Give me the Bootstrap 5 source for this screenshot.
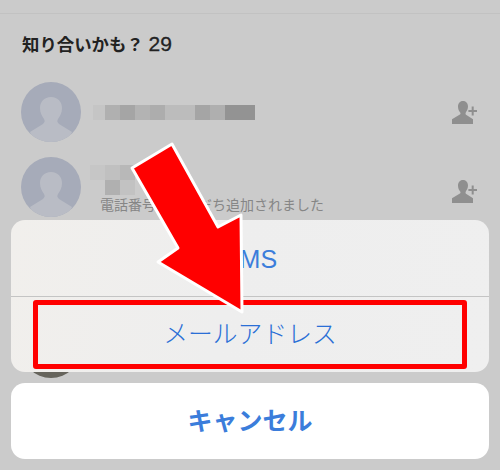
<!DOCTYPE html>
<html lang="ja">
<head>
<meta charset="utf-8">
<title>知り合いかも？</title>
<link href="https://cdn.jsdelivr.net/npm/bootstrap@5.3.0/dist/css/bootstrap.min.css" rel="stylesheet">
<style>
html,body{width:500px;height:470px;overflow:hidden}
body{background:#cbcbcb;font-family:"Liberation Sans","Noto Sans CJK JP",sans-serif;color:#1d1d1d}
.screen{position:relative;width:500px;height:470px;overflow:hidden}
.topline{height:14px;border-bottom:1px solid #c2c2c2}
.heading-txt{margin:0;padding:18px 0 0 22px;font-size:17.4px;line-height:26px;font-weight:700;color:#222}
.heading-txt .num{font-size:21px;line-height:20px;font-weight:400;-webkit-text-stroke:.3px #222}
.people{padding:24px 23px 0 21px}
.person{height:60px;margin-bottom:15px}
.person-gap{margin-top:101px}
.avatar{width:60px;height:60px;flex:none;display:block}
.info{flex:1;min-width:0;padding-left:9px;position:relative;height:60px}
.mosaic-a{position:absolute;left:12px;top:23px;width:162px;height:15px;background:linear-gradient(90deg,#c5c5c5 0 12px,#b0b0b0 12px 27px,#a5a5a5 27px 42px,#b3b3b3 42px 57px,#adadad 57px 72px,#bcbcbc 72px 102px,#a5a5a5 102px 117px,#afafaf 117px 132px,#939393 132px 162px)}
.mosaic-b{position:absolute;left:9px;top:8px;width:45px;height:15px;background:linear-gradient(90deg,#c6c6c6 0 15px,#c0c0c0 15px 30px,#b8b8b8 30px 45px)}
.mosaic-c{position:absolute;left:24px;top:23px;width:30px;height:15px;background:linear-gradient(90deg,#b0b0b0 0 15px,#c2c2c2 15px 30px)}
.sub-txt{position:absolute;left:19px;top:37px;font-size:14px;line-height:22px;color:#868686;white-space:nowrap}
.adder{width:25px;height:23px;flex:none}
.adder-low{margin-top:8px}
.sheet-wrap{position:absolute;left:11px;top:220px;width:478px}
.sheet{height:152px;border-radius:14px;overflow:hidden;background:linear-gradient(100deg,#f1efec,#eeeeee 45%,#efefef)}
.sheet .list-group-item{background:transparent;border:0;padding:0;color:#3b7ddb;font-family:"Liberation Sans","Noto Sans CJK JP",sans-serif;font-size:25px}
.sms-row{height:77px;line-height:78px;text-align:center;border-bottom:1px solid #c4c4c4 !important}
.mail-row{height:75px;padding:3px 22px 3px !important}
.sheet .list-group-item .mail-box{height:69px;border:5px solid #f00;border-radius:3px;font-size:24.8px;font-weight:300;line-height:60px;text-align:center;color:#2a6fd6}
.cancel-btn{display:block;width:100%;height:76px;margin-top:11px;border:0;border-radius:14px;background:#fff;color:#3b7ddb;font-size:25px;font-weight:700;line-height:74px;padding:0}
.cancel-btn:hover,.cancel-btn:active{background:#fff;color:#3b7ddb}
.big-arrow{position:absolute;left:0;top:0;width:500px;height:470px;pointer-events:none}
</style>
</head>
<body>
<svg width="0" height="0" class="d-block position-absolute">
  <defs>
    <symbol id="silhouette" viewBox="0 0 60 60">
      <circle cx="30" cy="30" r="30" fill="#a6abb9"/>
      <clipPath id="cc"><circle cx="30" cy="30" r="30"/></clipPath>
      <path clip-path="url(#cc)" d="M30 15c-7 0-11 5-11 11 0 5 2 8 4 11 1 2 1 3-1 5L9 50l4 12h34l4-12-13-8c-2-2-2-3-1-5 2-3 4-6 4-11 0-6-4-11-11-11z" fill="#b9bcc5"/>
    </symbol>
    <symbol id="addperson" viewBox="0 0 25 23">
      <path d="M11 0c-3.300 0-5 2.700-5 5.500 0 2.500.9 4.600 2.200 6 .5.600.4 1.600-.3 2.100L0 18.200V23h21v-4.800l-5.800-3.600c-1.200-.8-2-1-1.600-2.600.9-1.600 2.400-3.600 2.400-6.400C16 2.700 14.300 0 11 0z" fill="#8f8f8f"/>
      <path d="M19.700 5.500h2v3.500h3.300v2h-3.300v3.500h-2V11h-3.300V9h3.300z" fill="#8f8f8f"/>
    </symbol>
  </defs>
</svg>
<main class="screen">
  <div class="topline"></div>
  <h1 class="heading-txt">知り合いかも？ <span class="num">29</span></h1>
  <div class="people">
    <div class="person d-flex align-items-center">
      <svg class="avatar"><use href="#silhouette"/></svg>
      <div class="info"><div class="mosaic-a"></div></div>
      <svg class="adder"><use href="#addperson"/></svg>
    </div>
    <div class="person d-flex align-items-center">
      <svg class="avatar"><use href="#silhouette"/></svg>
      <div class="info">
        <div class="mosaic-b"></div>
        <div class="mosaic-c"></div>
        <div class="sub-txt">電話番号から友だち追加されました</div>
      </div>
      <svg class="adder adder-low"><use href="#addperson"/></svg>
    </div>
    <div class="person person-gap d-flex align-items-center">
      <svg class="avatar" viewBox="0 0 60 60"><circle cx="30" cy="30" r="30" fill="#66645c"/></svg>
    </div>
  </div>
  <div class="sheet-wrap">
    <div class="sheet list-group">
      <div class="list-group-item sms-row">SMS</div>
      <div class="list-group-item mail-row"><div class="mail-box">メールアドレス</div></div>
    </div>
    <button type="button" class="btn cancel-btn">キャンセル</button>
  </div>
  <svg class="big-arrow" viewBox="0 0 500 470">
    <polygon points="172,144 132,168 178,248 158,262 242,312 241,215 218,227" fill="#f00" stroke="#fff" stroke-width="3" stroke-linejoin="round"/>
  </svg>
</main>
<script src="https://cdn.jsdelivr.net/npm/bootstrap@5.3.0/dist/js/bootstrap.bundle.min.js"></script>
</body>
</html>
